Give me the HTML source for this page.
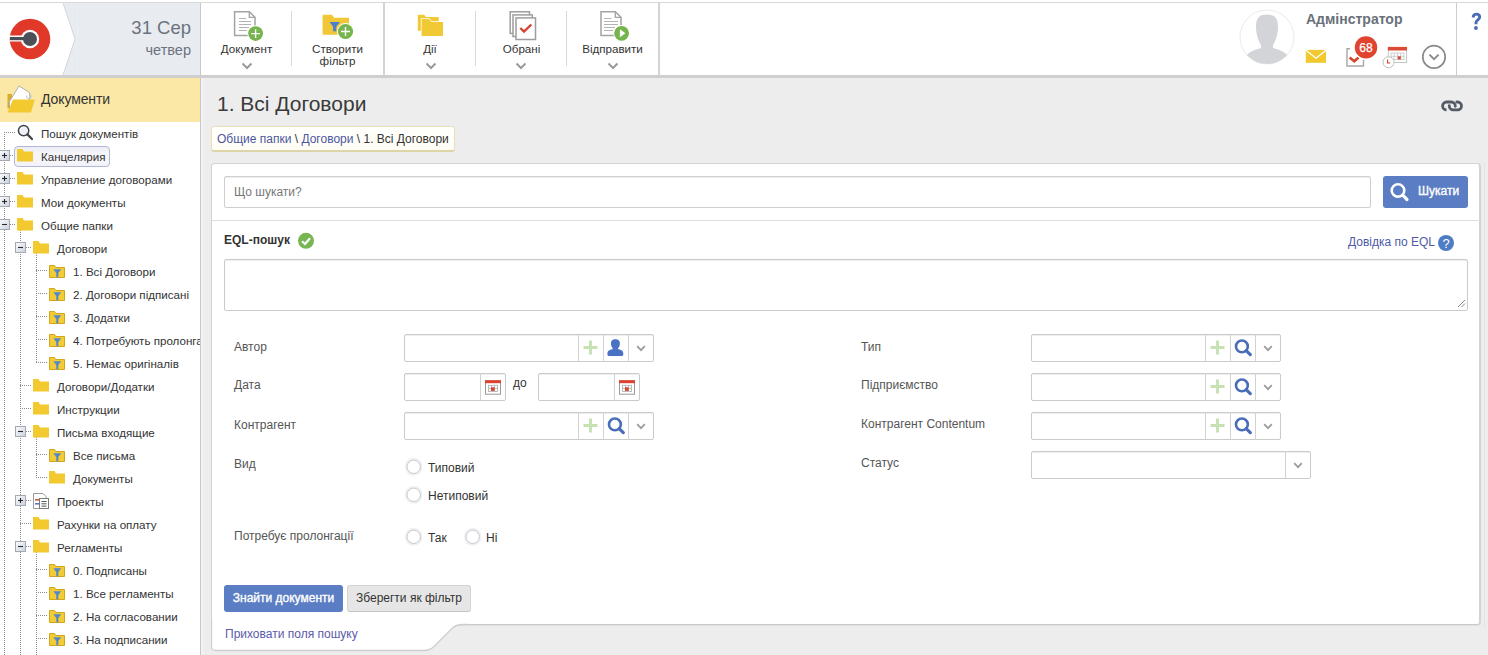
<!DOCTYPE html>
<html><head><meta charset="utf-8">
<style>
*{box-sizing:border-box;margin:0;padding:0}
html,body{width:1488px;height:655px;overflow:hidden;background:#ededed;font-family:"Liberation Sans",sans-serif;position:relative}
.a{position:absolute}
.t{position:absolute;white-space:nowrap;line-height:1}
/* header */
#hdr{left:0;top:0;width:1488px;height:78px;background:#fff}
#hdr .topline{left:0;top:2px;width:1488px;height:1px;background:#d9d9d9}
#hdr .botline{left:0;top:75px;width:1488px;height:3px;background:#cfcfcf}
.tb{color:#333;font-size:11.6px;text-align:center;margin-top:-0.6px}
.sep{background:#d8d8d8;width:1px}
.gsep{background:#d3d3d3;width:2px;top:3px;height:72px}
/* sidebar */
#side{left:0;top:78px;width:200px;height:577px;background:#fff;overflow:hidden}
#sideb{left:200px;top:78px;width:1px;height:577px;background:#c8c8c8}
.tr{position:absolute;font-size:11.6px;color:#333;white-space:nowrap;line-height:1}
/* main */
.lbl{position:absolute;font-size:12px;color:#555;white-space:nowrap;line-height:1}
.fld{position:absolute;background:#fff;border:1px solid #cbcbcb;border-radius:2px;box-shadow:inset 0 1px 1px rgba(0,0,0,0.07)}
.bs{position:absolute;top:0;bottom:0;width:1px;background:#dedede}
</style></head><body>
<div id="hdr" class="a">
  <div class="a topline"></div>
  <div class="a" style="left:63px;top:3px;width:137px;height:72px;background:#e8ebf0"></div>
  <svg class="a" style="left:0;top:3px" width="80" height="72">
    <polygon points="0,0 63,0 75,36 63,72 0,72" fill="#fff"/>
    <polyline points="63,0 75,36 63,72" fill="none" stroke="#d3d7dd" stroke-width="1"/>
    <line x1="77.5" y1="0" x2="77.5" y2="72" stroke="#eceef2" stroke-width="1"/>
  </svg>
  <svg class="a" style="left:9px;top:18px" width="42" height="42" viewBox="0 0 42 42">
    <circle cx="21" cy="21" r="20.3" fill="#e0392a"/>
    <rect x="1" y="17.5" width="20" height="6" fill="#fff"/>
    <circle cx="21" cy="21" r="9.2" fill="#fff"/>
    <rect x="1" y="19" width="20" height="3.2" fill="#4b5058"/>
    <circle cx="21" cy="21" r="7" fill="#4b5058"/>
  </svg>
  <div class="t" style="right:1297px;top:19px;font-size:18.5px;color:#6b737e">31 Сер</div>
  <div class="t" style="right:1297px;top:43px;font-size:14.5px;color:#6b737e">четвер</div>
  <div class="a" style="left:200px;top:3px;width:1px;height:72px;background:#c8c8c8"></div>

  <div class="a gsep" style="left:383px"></div>
  <div class="a gsep" style="left:658px"></div>
  <div class="a sep" style="left:291px;top:11px;height:55px"></div>
  <div class="a sep" style="left:475px;top:11px;height:55px"></div>
  <div class="a sep" style="left:566px;top:11px;height:55px"></div>

  <!-- Документ icon -->
  <svg class="a" style="left:230px;top:8px" width="40" height="36" viewBox="0 0 40 36">
    <path d="M4.6 3.7 H19.3 L25 9.3 V27.5 H4.6 Z" fill="#fff" stroke="#a3a3a3" stroke-width="1.5"/>
    <path d="M19.3 3.7 V9.3 H25" fill="none" stroke="#a3a3a3" stroke-width="1.3"/>
    <g stroke="#b3b3b3" stroke-width="1"><line x1="9" y1="10.5" x2="16" y2="10.5"/><line x1="9" y1="13.5" x2="21" y2="13.5"/><line x1="9" y1="16.5" x2="21" y2="16.5"/><line x1="9" y1="19.5" x2="19" y2="19.5"/><line x1="9" y1="22.5" x2="17" y2="22.5"/></g>
    <circle cx="25.6" cy="25.6" r="8.3" fill="#fff"/>
    <circle cx="25.6" cy="25.6" r="7.4" fill="#76b44e"/>
    <path d="M25.6 21.2 V30 M21.2 25.6 H30" stroke="#fff" stroke-width="1.4"/>
  </svg>
  <div class="t tb" style="left:201px;width:91px;top:44px">Документ</div>
  <svg class="a" style="left:241px;top:62px" width="12" height="8"><polyline points="1.5,1.5 6,6 10.5,1.5" fill="none" stroke="#9a9a9a" stroke-width="2"/></svg>

  <!-- Створити фільтр icon -->
  <svg class="a" style="left:320px;top:12px" width="36" height="30" viewBox="0 0 36 30">
    <path d="M2.6 2.8 H12 L14 5.8 H29 V22.7 H2.6 Z" fill="#f1c736"/>
    <path d="M9.4 10 H20 L16.3 14.5 V19.2 H13.1 V14.5 Z" fill="#4a7fcf"/>
    <circle cx="25.5" cy="19.5" r="8.5" fill="#fff"/>
    <circle cx="25.5" cy="19.5" r="7.6" fill="#76b44e"/>
    <path d="M25.5 15 V24 M21 19.5 H30" stroke="#fff" stroke-width="1.4"/>
  </svg>
  <div class="t tb" style="left:292px;width:91px;top:44px;line-height:11.2px">Створити<br>фільтр</div>

  <!-- Дії -->
  <svg class="a" style="left:415px;top:12px" width="32" height="28" viewBox="0 0 32 28">
    <path d="M2.8 2.8 H9 L11 5 H23.7 V18.7 H2.8 Z" fill="#f0c934"/>
    <path d="M6.6 6.9 H14 L16.5 10.1 H28 V24 H6.6 Z" fill="#fff" stroke="#fff" stroke-width="1.5"/>
    <path d="M6.6 6.9 H14 L16.5 10.1 H28 V24 H6.6 Z" fill="#f0c934"/>
  </svg>
  <div class="t tb" style="left:384px;width:92px;top:44px">Дії</div>
  <svg class="a" style="left:425px;top:62px" width="12" height="8"><polyline points="1.5,1.5 6,6 10.5,1.5" fill="none" stroke="#9a9a9a" stroke-width="2"/></svg>

  <!-- Обрані -->
  <svg class="a" style="left:506px;top:8px" width="34" height="36" viewBox="0 0 34 36">
    <rect x="4.2" y="3.8" width="19.3" height="21.6" fill="#fff" stroke="#9d9d9d" stroke-width="1.5"/>
    <rect x="7" y="6.9" width="19.3" height="21.6" fill="#fff" stroke="#9d9d9d" stroke-width="1.5"/>
    <rect x="10" y="9.9" width="19.5" height="21.6" fill="#fff" stroke="#9d9d9d" stroke-width="1.5"/>
    <polyline points="14.3,20 18,23.5 25.3,16.5" fill="none" stroke="#d8432f" stroke-width="2.4"/>
  </svg>
  <div class="t tb" style="left:476px;width:91px;top:44px">Обрані</div>
  <svg class="a" style="left:515px;top:62px" width="12" height="8"><polyline points="1.5,1.5 6,6 10.5,1.5" fill="none" stroke="#9a9a9a" stroke-width="2"/></svg>

  <!-- Відправити -->
  <svg class="a" style="left:597px;top:8px" width="36" height="36" viewBox="0 0 36 36">
    <path d="M4 3.8 H18.3 L24 9.3 V27.5 H4 Z" fill="#fff" stroke="#a3a3a3" stroke-width="1.5"/>
    <path d="M18.3 3.8 V9.3 H24" fill="none" stroke="#a3a3a3" stroke-width="1.3"/>
    <g stroke="#b3b3b3" stroke-width="1"><line x1="7" y1="10.5" x2="14.5" y2="10.5"/><line x1="7" y1="13.5" x2="21" y2="13.5"/><line x1="7" y1="16.5" x2="21" y2="16.5"/><line x1="7" y1="19.5" x2="18" y2="19.5"/><line x1="7" y1="22.5" x2="16" y2="22.5"/></g>
    <circle cx="24.6" cy="25.3" r="8.3" fill="#fff"/>
    <circle cx="24.6" cy="25.3" r="7.4" fill="#76b44e"/>
    <path d="M22.9 21.2 V29.2 L28.4 25.2 Z" fill="#fff"/>
  </svg>
  <div class="t tb" style="left:567px;width:91px;top:44px">Відправити</div>
  <svg class="a" style="left:607px;top:62px" width="12" height="8"><polyline points="1.5,1.5 6,6 10.5,1.5" fill="none" stroke="#9a9a9a" stroke-width="2"/></svg>

  <!-- avatar -->
  <svg class="a" style="left:1238px;top:8px" width="58" height="58" viewBox="0 0 58 58">
    <defs><clipPath id="avc"><circle cx="29" cy="29" r="27"/></clipPath></defs>
    <circle cx="29" cy="29" r="27" fill="#fff" stroke="#ebebed" stroke-width="1"/>
    <g clip-path="url(#avc)" fill="#d3d4d8">
      <path d="M18 19 C18 9 22 6.5 29 6.5 C36 6.5 40 9 40 19 C40 27 37 34 35 37 V40 C42 42 47 44 49 47 L45 58 H13 L9 47 C11 44 16 42 23 40 V37 C21 34 18 27 18 19 Z"/>
    </g>
  </svg>
  <div class="t" style="left:1306px;top:12px;font-size:14px;font-weight:bold;color:#6a717a;letter-spacing:0px">Адмінстратор</div>
  <!-- mail -->
  <svg class="a" style="left:1305px;top:49px" width="22" height="15" viewBox="0 0 22 15">
    <rect x="0.8" y="0.9" width="20.2" height="12.9" fill="#f1c92f"/>
    <polyline points="1,1.2 11,9.2 21,1.2" fill="none" stroke="#fff" stroke-width="1.3"/>
  </svg>
  <!-- tasks -->
  <svg class="a" style="left:1344px;top:46px" width="22" height="22" viewBox="0 0 22 22">
    <path d="M6 2.8 H3 V20 H19.5 V12" fill="none" stroke="#a8a8a8" stroke-width="1.4"/>
    <polyline points="5.6,11.5 10.3,15.3 14.5,11.5" fill="none" stroke="#d8432f" stroke-width="2.6"/>
  </svg>
  <svg class="a" style="left:1352px;top:34px" width="28" height="26" viewBox="0 0 28 26">
    <circle cx="14" cy="13.4" r="12.4" fill="#fff"/>
    <circle cx="14" cy="13.4" r="11.2" fill="#e0442f"/>
  </svg>
  <div class="t" style="left:1354px;top:41.5px;width:24px;text-align:center;font-size:12px;color:#fff;-webkit-text-stroke:0.25px #fff">68</div>
  <!-- calendar -->
  <svg class="a" style="left:1381px;top:45px" width="28" height="25" viewBox="0 0 28 25">
    <rect x="7.3" y="2.5" width="18.3" height="15" fill="#fff" stroke="#c4c4c4" stroke-width="1"/>
    <rect x="6.9" y="1.9" width="19.1" height="3.6" fill="#da4a35"/>
    <g fill="none" stroke="#c9c9c9" stroke-width="0.9"><rect x="10" y="8" width="13" height="6.6"/><line x1="13.2" y1="8" x2="13.2" y2="14.6"/><line x1="16.5" y1="8" x2="16.5" y2="14.6"/><line x1="19.8" y1="8" x2="19.8" y2="14.6"/><line x1="10" y1="11.3" x2="23" y2="11.3"/></g>
    <rect x="16.8" y="11.4" width="3" height="3" fill="#d9432f"/>
    <circle cx="7.5" cy="17.3" r="5.5" fill="#fff" stroke="#bdbdbd" stroke-width="1"/>
    <polyline points="6.6,14.5 6.6,18 9.3,18" fill="none" stroke="#d9432f" stroke-width="1.1"/>
  </svg>
  <!-- dropdown circle -->
  <svg class="a" style="left:1420px;top:43px" width="28" height="28" viewBox="0 0 28 28">
    <circle cx="14" cy="13.9" r="11.2" fill="none" stroke="#8a8a8a" stroke-width="1.7"/>
    <polyline points="9.5,11.6 14,16.2 18.6,11.6" fill="none" stroke="#8a8a8a" stroke-width="1.9"/>
  </svg>
  <div class="a" style="left:1456px;top:3px;width:1px;height:72px;background:#cdcdcd"></div>
  <svg class="a" style="left:1468px;top:10px" width="16" height="22" viewBox="0 0 16 22"><path d="M5.2 7.5 C5.2 5.2 6.8 4.1 8.5 4.1 C10.3 4.1 11.7 5.3 11.7 7.2 C11.7 9.5 8 10.2 8 12.5 V14.2" fill="none" stroke="#4b6db2" stroke-width="2.9"/><circle cx="7.9" cy="18" r="1.9" fill="#4b6db2"/></svg>

  <div class="a botline"></div>
</div>
<div id="sideb" class="a"></div>

<div id="side" class="a">
<div class="a" style="left:0;top:0;width:200px;height:44px;background:#fbe8a6"></div>
<svg class="a" style="left:6px;top:6px" width="32" height="30" viewBox="0 0 32 30">
   <path d="M1.5 10 H6 V24.5 H1.5 Z" fill="#d9ad2a"/>
   <path d="M3.5 17.5 L13 2 L23.5 8.5 L24 14 L18 24 H3.5 Z" fill="#fff" stroke="#b0b0b0" stroke-width="1"/>
   <path d="M20.8 11.5 a2.2 2.2 0 1 0 3 -1" fill="none" stroke="#b8c0d0" stroke-width="1"/>
   <path d="M7 15.5 H28.8 L25 28.5 H1.5 Z" fill="#f2c92f"/>
 </svg>
<div class="t" style="left:41px;top:14px;font-size:14px;color:#333;letter-spacing:-0.1px">Документи</div>
<div class="a" style="left:4px;top:54px;width:1px;height:523px;background:repeating-linear-gradient(to bottom,#8a8a8a 0 1px,transparent 1px 2px)"></div>
<div class="a" style="left:20px;top:152px;width:1px;height:425px;background:repeating-linear-gradient(to bottom,#8a8a8a 0 1px,transparent 1px 2px)"></div>
<div class="a" style="left:36px;top:175px;width:1px;height:110px;background:repeating-linear-gradient(to bottom,#8a8a8a 0 1px,transparent 1px 2px)"></div>
<div class="a" style="left:36px;top:359px;width:1px;height:41px;background:repeating-linear-gradient(to bottom,#8a8a8a 0 1px,transparent 1px 2px)"></div>
<div class="a" style="left:36px;top:474px;width:1px;height:103px;background:repeating-linear-gradient(to bottom,#8a8a8a 0 1px,transparent 1px 2px)"></div>
<div class="a" style="left:4px;top:54px;width:11px;height:1px;background:repeating-linear-gradient(to right,#8a8a8a 0 1px,transparent 1px 2px)"></div>
<svg class="a" style="left:16.5px;top:46px" width="17" height="17" viewBox="0 0 17 17"><circle cx="6.6" cy="6.6" r="5.2" fill="#eef2f8" stroke="#3f4247" stroke-width="1.5"/><line x1="10.4" y1="10.4" x2="15" y2="15" stroke="#3f4247" stroke-width="2.2" stroke-linecap="round"/></svg>
<div class="tr" style="left:41px;top:50px">Пошук документів</div>
<div class="a" style="left:4px;top:77px;width:11px;height:1px;background:repeating-linear-gradient(to right,#8a8a8a 0 1px,transparent 1px 2px)"></div>
<div class="a" style="left:14px;top:68px;width:96px;height:21px;border:1px solid #b2b8d3;border-radius:4px;background:linear-gradient(#eceef7,#f6f6fa 40%,#f2f2f8)"></div>
<svg class="a" style="left:-1px;top:72px" width="11" height="11" viewBox="0 0 11 11"><defs><linearGradient id="tg1" x1="0" y1="0" x2="1" y2="1"><stop offset="0" stop-color="#fdfdff"/><stop offset="1" stop-color="#c9d1de"/></linearGradient></defs><rect x="0.5" y="0.5" width="10" height="10" fill="url(#tg1)" stroke="#a4a8b0" stroke-width="1"/><line x1="3" y1="5.5" x2="8" y2="5.5" stroke="#2a2a2a" stroke-width="1.1"/><line x1="5.5" y1="3" x2="5.5" y2="8" stroke="#2a2a2a" stroke-width="1.1"/></svg>
<svg class="a" style="left:17px;top:71px" width="16" height="13" viewBox="0 0 16 13"><path d="M0 0 H5.5 L7 2.6 H16 V12.6 H0 Z" fill="#f2c92f"/></svg>
<div class="tr" style="left:41px;top:73px">Канцелярия</div>
<div class="a" style="left:4px;top:100px;width:11px;height:1px;background:repeating-linear-gradient(to right,#8a8a8a 0 1px,transparent 1px 2px)"></div>
<svg class="a" style="left:-1px;top:95px" width="11" height="11" viewBox="0 0 11 11"><defs><linearGradient id="tg2" x1="0" y1="0" x2="1" y2="1"><stop offset="0" stop-color="#fdfdff"/><stop offset="1" stop-color="#c9d1de"/></linearGradient></defs><rect x="0.5" y="0.5" width="10" height="10" fill="url(#tg2)" stroke="#a4a8b0" stroke-width="1"/><line x1="3" y1="5.5" x2="8" y2="5.5" stroke="#2a2a2a" stroke-width="1.1"/><line x1="5.5" y1="3" x2="5.5" y2="8" stroke="#2a2a2a" stroke-width="1.1"/></svg>
<svg class="a" style="left:17px;top:94px" width="16" height="13" viewBox="0 0 16 13"><path d="M0 0 H5.5 L7 2.6 H16 V12.6 H0 Z" fill="#f2c92f"/></svg>
<div class="tr" style="left:41px;top:96px">Управление договорами</div>
<div class="a" style="left:4px;top:123px;width:11px;height:1px;background:repeating-linear-gradient(to right,#8a8a8a 0 1px,transparent 1px 2px)"></div>
<svg class="a" style="left:-1px;top:118px" width="11" height="11" viewBox="0 0 11 11"><defs><linearGradient id="tg3" x1="0" y1="0" x2="1" y2="1"><stop offset="0" stop-color="#fdfdff"/><stop offset="1" stop-color="#c9d1de"/></linearGradient></defs><rect x="0.5" y="0.5" width="10" height="10" fill="url(#tg3)" stroke="#a4a8b0" stroke-width="1"/><line x1="3" y1="5.5" x2="8" y2="5.5" stroke="#2a2a2a" stroke-width="1.1"/><line x1="5.5" y1="3" x2="5.5" y2="8" stroke="#2a2a2a" stroke-width="1.1"/></svg>
<svg class="a" style="left:17px;top:117px" width="16" height="13" viewBox="0 0 16 13"><path d="M0 0 H5.5 L7 2.6 H16 V12.6 H0 Z" fill="#f2c92f"/></svg>
<div class="tr" style="left:41px;top:119px">Мои документы</div>
<div class="a" style="left:4px;top:146px;width:11px;height:1px;background:repeating-linear-gradient(to right,#8a8a8a 0 1px,transparent 1px 2px)"></div>
<svg class="a" style="left:-1px;top:141px" width="11" height="11" viewBox="0 0 11 11"><defs><linearGradient id="tg4" x1="0" y1="0" x2="1" y2="1"><stop offset="0" stop-color="#fdfdff"/><stop offset="1" stop-color="#c9d1de"/></linearGradient></defs><rect x="0.5" y="0.5" width="10" height="10" fill="url(#tg4)" stroke="#a4a8b0" stroke-width="1"/><line x1="3" y1="5.5" x2="8" y2="5.5" stroke="#2a2a2a" stroke-width="1.1"/></svg>
<svg class="a" style="left:17px;top:140px" width="16" height="13" viewBox="0 0 16 13"><path d="M0 0 H5.5 L7 2.6 H16 V12.6 H0 Z" fill="#f2c92f"/></svg>
<div class="tr" style="left:41px;top:142px">Общие папки</div>
<div class="a" style="left:20px;top:169px;width:11px;height:1px;background:repeating-linear-gradient(to right,#8a8a8a 0 1px,transparent 1px 2px)"></div>
<svg class="a" style="left:15px;top:164px" width="11" height="11" viewBox="0 0 11 11"><defs><linearGradient id="tg5" x1="0" y1="0" x2="1" y2="1"><stop offset="0" stop-color="#fdfdff"/><stop offset="1" stop-color="#c9d1de"/></linearGradient></defs><rect x="0.5" y="0.5" width="10" height="10" fill="url(#tg5)" stroke="#a4a8b0" stroke-width="1"/><line x1="3" y1="5.5" x2="8" y2="5.5" stroke="#2a2a2a" stroke-width="1.1"/></svg>
<svg class="a" style="left:33px;top:163px" width="16" height="13" viewBox="0 0 16 13"><path d="M0 0 H5.5 L7 2.6 H16 V12.6 H0 Z" fill="#f2c92f"/></svg>
<div class="tr" style="left:57px;top:165px">Договори</div>
<div class="a" style="left:36px;top:192px;width:11px;height:1px;background:repeating-linear-gradient(to right,#8a8a8a 0 1px,transparent 1px 2px)"></div>
<svg class="a" style="left:49px;top:187px" width="16" height="13" viewBox="0 0 16 13"><path d="M0.5 0.5 H5.5 L6.8 2.5 H15.5 V12.5 H0.5 Z" fill="#f2cb35" stroke="#d2a61a" stroke-width="1"/><path d="M4.4 4.2 H12.2 L9.3 8 V12.3 H7.3 V8 Z" fill="#5088cb"/></svg>
<div class="tr" style="left:73px;top:188px">1. Всі Договори</div>
<div class="a" style="left:36px;top:215px;width:11px;height:1px;background:repeating-linear-gradient(to right,#8a8a8a 0 1px,transparent 1px 2px)"></div>
<svg class="a" style="left:49px;top:210px" width="16" height="13" viewBox="0 0 16 13"><path d="M0.5 0.5 H5.5 L6.8 2.5 H15.5 V12.5 H0.5 Z" fill="#f2cb35" stroke="#d2a61a" stroke-width="1"/><path d="M4.4 4.2 H12.2 L9.3 8 V12.3 H7.3 V8 Z" fill="#5088cb"/></svg>
<div class="tr" style="left:73px;top:211px">2. Договори підписані</div>
<div class="a" style="left:36px;top:238px;width:11px;height:1px;background:repeating-linear-gradient(to right,#8a8a8a 0 1px,transparent 1px 2px)"></div>
<svg class="a" style="left:49px;top:233px" width="16" height="13" viewBox="0 0 16 13"><path d="M0.5 0.5 H5.5 L6.8 2.5 H15.5 V12.5 H0.5 Z" fill="#f2cb35" stroke="#d2a61a" stroke-width="1"/><path d="M4.4 4.2 H12.2 L9.3 8 V12.3 H7.3 V8 Z" fill="#5088cb"/></svg>
<div class="tr" style="left:73px;top:234px">3. Додатки</div>
<div class="a" style="left:36px;top:261px;width:11px;height:1px;background:repeating-linear-gradient(to right,#8a8a8a 0 1px,transparent 1px 2px)"></div>
<svg class="a" style="left:49px;top:256px" width="16" height="13" viewBox="0 0 16 13"><path d="M0.5 0.5 H5.5 L6.8 2.5 H15.5 V12.5 H0.5 Z" fill="#f2cb35" stroke="#d2a61a" stroke-width="1"/><path d="M4.4 4.2 H12.2 L9.3 8 V12.3 H7.3 V8 Z" fill="#5088cb"/></svg>
<div class="tr" style="left:73px;top:257px">4. Потребують пролонгації</div>
<div class="a" style="left:36px;top:284px;width:11px;height:1px;background:repeating-linear-gradient(to right,#8a8a8a 0 1px,transparent 1px 2px)"></div>
<svg class="a" style="left:49px;top:279px" width="16" height="13" viewBox="0 0 16 13"><path d="M0.5 0.5 H5.5 L6.8 2.5 H15.5 V12.5 H0.5 Z" fill="#f2cb35" stroke="#d2a61a" stroke-width="1"/><path d="M4.4 4.2 H12.2 L9.3 8 V12.3 H7.3 V8 Z" fill="#5088cb"/></svg>
<div class="tr" style="left:73px;top:280px">5. Немає оригіналів</div>
<div class="a" style="left:20px;top:307px;width:11px;height:1px;background:repeating-linear-gradient(to right,#8a8a8a 0 1px,transparent 1px 2px)"></div>
<svg class="a" style="left:33px;top:301px" width="16" height="13" viewBox="0 0 16 13"><path d="M0 0 H5.5 L7 2.6 H16 V12.6 H0 Z" fill="#f2c92f"/></svg>
<div class="tr" style="left:57px;top:303px">Договори/Додатки</div>
<div class="a" style="left:20px;top:330px;width:11px;height:1px;background:repeating-linear-gradient(to right,#8a8a8a 0 1px,transparent 1px 2px)"></div>
<svg class="a" style="left:33px;top:324px" width="16" height="13" viewBox="0 0 16 13"><path d="M0 0 H5.5 L7 2.6 H16 V12.6 H0 Z" fill="#f2c92f"/></svg>
<div class="tr" style="left:57px;top:326px">Инструкции</div>
<div class="a" style="left:20px;top:353px;width:11px;height:1px;background:repeating-linear-gradient(to right,#8a8a8a 0 1px,transparent 1px 2px)"></div>
<svg class="a" style="left:15px;top:348px" width="11" height="11" viewBox="0 0 11 11"><defs><linearGradient id="tg13" x1="0" y1="0" x2="1" y2="1"><stop offset="0" stop-color="#fdfdff"/><stop offset="1" stop-color="#c9d1de"/></linearGradient></defs><rect x="0.5" y="0.5" width="10" height="10" fill="url(#tg13)" stroke="#a4a8b0" stroke-width="1"/><line x1="3" y1="5.5" x2="8" y2="5.5" stroke="#2a2a2a" stroke-width="1.1"/></svg>
<svg class="a" style="left:33px;top:347px" width="16" height="13" viewBox="0 0 16 13"><path d="M0 0 H5.5 L7 2.6 H16 V12.6 H0 Z" fill="#f2c92f"/></svg>
<div class="tr" style="left:57px;top:349px">Письма входящие</div>
<div class="a" style="left:36px;top:376px;width:11px;height:1px;background:repeating-linear-gradient(to right,#8a8a8a 0 1px,transparent 1px 2px)"></div>
<svg class="a" style="left:49px;top:371px" width="16" height="13" viewBox="0 0 16 13"><path d="M0.5 0.5 H5.5 L6.8 2.5 H15.5 V12.5 H0.5 Z" fill="#f2cb35" stroke="#d2a61a" stroke-width="1"/><path d="M4.4 4.2 H12.2 L9.3 8 V12.3 H7.3 V8 Z" fill="#5088cb"/></svg>
<div class="tr" style="left:73px;top:372px">Все письма</div>
<div class="a" style="left:36px;top:399px;width:11px;height:1px;background:repeating-linear-gradient(to right,#8a8a8a 0 1px,transparent 1px 2px)"></div>
<svg class="a" style="left:49px;top:393px" width="16" height="13" viewBox="0 0 16 13"><path d="M0 0 H5.5 L7 2.6 H16 V12.6 H0 Z" fill="#f2c92f"/></svg>
<div class="tr" style="left:73px;top:395px">Документы</div>
<div class="a" style="left:20px;top:422px;width:11px;height:1px;background:repeating-linear-gradient(to right,#8a8a8a 0 1px,transparent 1px 2px)"></div>
<svg class="a" style="left:15px;top:417px" width="11" height="11" viewBox="0 0 11 11"><defs><linearGradient id="tg16" x1="0" y1="0" x2="1" y2="1"><stop offset="0" stop-color="#fdfdff"/><stop offset="1" stop-color="#c9d1de"/></linearGradient></defs><rect x="0.5" y="0.5" width="10" height="10" fill="url(#tg16)" stroke="#a4a8b0" stroke-width="1"/><line x1="3" y1="5.5" x2="8" y2="5.5" stroke="#2a2a2a" stroke-width="1.1"/><line x1="5.5" y1="3" x2="5.5" y2="8" stroke="#2a2a2a" stroke-width="1.1"/></svg>
<svg class="a" style="left:33px;top:415px" width="17" height="17" viewBox="0 0 17 17"><path d="M0.5 0.5 H10 L13 3.5 V15.5 H0.5 Z" fill="#fff" stroke="#9a9a9a" stroke-width="1"/><rect x="6.5" y="5.5" width="9" height="10" fill="#fff" stroke="#7a7a7a" stroke-width="1"/><line x1="8.5" y1="8.5" x2="13.5" y2="8.5" stroke="#555" stroke-width="1"/><line x1="8.5" y1="10.8" x2="13.5" y2="10.8" stroke="#555" stroke-width="1"/><line x1="8.5" y1="13.1" x2="13.5" y2="13.1" stroke="#555" stroke-width="1"/><rect x="2" y="6" width="4.5" height="1.6" fill="#c85a4a"/><rect x="2" y="10" width="4.5" height="1.6" fill="#5a78c0"/></svg>
<div class="tr" style="left:57px;top:418px">Проекты</div>
<div class="a" style="left:20px;top:445px;width:11px;height:1px;background:repeating-linear-gradient(to right,#8a8a8a 0 1px,transparent 1px 2px)"></div>
<svg class="a" style="left:33px;top:439px" width="16" height="13" viewBox="0 0 16 13"><path d="M0 0 H5.5 L7 2.6 H16 V12.6 H0 Z" fill="#f2c92f"/></svg>
<div class="tr" style="left:57px;top:441px">Рахунки на оплату</div>
<div class="a" style="left:20px;top:468px;width:11px;height:1px;background:repeating-linear-gradient(to right,#8a8a8a 0 1px,transparent 1px 2px)"></div>
<svg class="a" style="left:15px;top:463px" width="11" height="11" viewBox="0 0 11 11"><defs><linearGradient id="tg18" x1="0" y1="0" x2="1" y2="1"><stop offset="0" stop-color="#fdfdff"/><stop offset="1" stop-color="#c9d1de"/></linearGradient></defs><rect x="0.5" y="0.5" width="10" height="10" fill="url(#tg18)" stroke="#a4a8b0" stroke-width="1"/><line x1="3" y1="5.5" x2="8" y2="5.5" stroke="#2a2a2a" stroke-width="1.1"/></svg>
<svg class="a" style="left:33px;top:462px" width="16" height="13" viewBox="0 0 16 13"><path d="M0 0 H5.5 L7 2.6 H16 V12.6 H0 Z" fill="#f2c92f"/></svg>
<div class="tr" style="left:57px;top:464px">Регламенты</div>
<div class="a" style="left:36px;top:491px;width:11px;height:1px;background:repeating-linear-gradient(to right,#8a8a8a 0 1px,transparent 1px 2px)"></div>
<svg class="a" style="left:49px;top:486px" width="16" height="13" viewBox="0 0 16 13"><path d="M0.5 0.5 H5.5 L6.8 2.5 H15.5 V12.5 H0.5 Z" fill="#f2cb35" stroke="#d2a61a" stroke-width="1"/><path d="M4.4 4.2 H12.2 L9.3 8 V12.3 H7.3 V8 Z" fill="#5088cb"/></svg>
<div class="tr" style="left:73px;top:487px">0. Подписаны</div>
<div class="a" style="left:36px;top:514px;width:11px;height:1px;background:repeating-linear-gradient(to right,#8a8a8a 0 1px,transparent 1px 2px)"></div>
<svg class="a" style="left:49px;top:509px" width="16" height="13" viewBox="0 0 16 13"><path d="M0.5 0.5 H5.5 L6.8 2.5 H15.5 V12.5 H0.5 Z" fill="#f2cb35" stroke="#d2a61a" stroke-width="1"/><path d="M4.4 4.2 H12.2 L9.3 8 V12.3 H7.3 V8 Z" fill="#5088cb"/></svg>
<div class="tr" style="left:73px;top:510px">1. Все регламенты</div>
<div class="a" style="left:36px;top:537px;width:11px;height:1px;background:repeating-linear-gradient(to right,#8a8a8a 0 1px,transparent 1px 2px)"></div>
<svg class="a" style="left:49px;top:532px" width="16" height="13" viewBox="0 0 16 13"><path d="M0.5 0.5 H5.5 L6.8 2.5 H15.5 V12.5 H0.5 Z" fill="#f2cb35" stroke="#d2a61a" stroke-width="1"/><path d="M4.4 4.2 H12.2 L9.3 8 V12.3 H7.3 V8 Z" fill="#5088cb"/></svg>
<div class="tr" style="left:73px;top:533px">2. На согласовании</div>
<div class="a" style="left:36px;top:560px;width:11px;height:1px;background:repeating-linear-gradient(to right,#8a8a8a 0 1px,transparent 1px 2px)"></div>
<svg class="a" style="left:49px;top:555px" width="16" height="13" viewBox="0 0 16 13"><path d="M0.5 0.5 H5.5 L6.8 2.5 H15.5 V12.5 H0.5 Z" fill="#f2cb35" stroke="#d2a61a" stroke-width="1"/><path d="M4.4 4.2 H12.2 L9.3 8 V12.3 H7.3 V8 Z" fill="#5088cb"/></svg>
<div class="tr" style="left:73px;top:556px">3. На подписании</div>
</div>
<!-- main -->
<div class="a" style="left:201px;top:78px;width:4px;height:577px;background:linear-gradient(to right,#f3f3f3,#ededed)"></div>
<div class="t" style="left:217px;top:93px;font-size:21px;color:#3a3a3a">1. Всі Договори</div>
<svg class="a" style="left:1439px;top:99px" width="26" height="16" viewBox="0 0 26 16">
  <path d="M6.5 10.8 H7.5 A3.9 3.9 0 0 1 7.5 3 H12.4 A3.9 3.9 0 0 1 16.3 6.9 V7.3" fill="none" stroke="#545a66" stroke-width="2.8" stroke-linecap="round"/>
  <path d="M10.3 6.6 V6.9 A3.9 3.9 0 0 0 14.2 10.8 H18.6 A3.9 3.9 0 0 0 18.6 3 H17.8" fill="none" stroke="#545a66" stroke-width="2.8" stroke-linecap="round"/>
</svg>
<div class="a" style="left:211px;top:126px;width:244px;height:26px;background:linear-gradient(#fffffd,#fffdf4);border:1px solid #e8e0bb;border-bottom:2px solid #ddd4aa;border-radius:3px"></div>
<div class="t" style="left:217px;top:133px;font-size:12px;color:#333"><span style="color:#4d57a2">Общие папки</span> \ <span style="color:#4d57a2">Договори</span> \ 1. Всі Договори</div>

<div class="a" style="left:211px;top:163px;width:1270px;height:462px;background:#fff;border:1px solid #d3d3d3;border-right:2px solid #d3d3d3;border-bottom:1px solid #c9c9c9;border-radius:4px;box-shadow:0 1px 1px rgba(0,0,0,0.05)"></div>
<svg class="a" style="left:211px;top:618px" width="270" height="35" viewBox="0 0 270 35">
  <path d="M0 0 V28.5 A4 4 0 0 0 4.5 32.5 H213 C218 32.5 220.5 31 223.5 28 L241 10.5 C244 7.5 247 6.5 252 6.5 V0 Z" fill="#fff"/>
  <path d="M0.5 0 V28.5 A4 4 0 0 0 4.5 32.5 H213 C218 32.5 220.5 31 223.5 28 L241 10.5 C244 7.5 247 6.5 252 6.5 H258" fill="none" stroke="#cecece" stroke-width="1.3"/>
</svg>

<div class="fld" style="left:224px;top:176px;width:1147px;height:32px;border-color:#cfcfcf"></div>
<div class="t" style="left:234px;top:186px;font-size:12px;color:#777">Що шукати?</div>
<div class="a" style="left:1383px;top:176px;width:85px;height:32px;background:#5a7dc3;border-radius:3px"></div>
<svg class="a" style="left:1388px;top:180px" width="24" height="24" viewBox="0 0 24 24"><circle cx="10" cy="10.5" r="6.3" fill="none" stroke="#fff" stroke-width="2.6"/><line x1="14.7" y1="15.2" x2="19" y2="19.5" stroke="#fff" stroke-width="3.2" stroke-linecap="round"/></svg>
<div class="t" style="left:1418px;top:185px;font-size:12px;color:#fff;-webkit-text-stroke:0.35px #fff">Шукати</div>

<div class="a" style="left:212px;top:220px;width:1268px;height:1px;background:#dddddd"></div>
<div class="t" style="left:224px;top:234px;font-size:12px;font-weight:bold;color:#333">EQL-пошук</div>
<svg class="a" style="left:297px;top:232px" width="18" height="18" viewBox="0 0 18 18"><circle cx="9" cy="8.8" r="8" fill="#78b652"/><polyline points="5,9.2 8,12 13,6.2" fill="none" stroke="#fff" stroke-width="2.2"/></svg>
<div class="t" style="left:1348px;top:236px;font-size:12px;color:#4f5aa8">Довідка по EQL</div>
<svg class="a" style="left:1437px;top:233px" width="18" height="18" viewBox="0 0 18 18"><circle cx="9" cy="10" r="8" fill="#4f7dc4"/><text x="9" y="14.6" text-anchor="middle" font-family="Liberation Sans" font-size="13" fill="#fff">?</text></svg>
<div class="fld" style="left:224px;top:259px;width:1244px;height:52px"></div>
<svg class="a" style="left:1456px;top:298px" width="10" height="10" viewBox="0 0 10 10"><path d="M2 9 L9 2 M5.5 9 L9 5.5" stroke="#888" stroke-width="1"/></svg>

<div class="lbl" style="left:234px;top:341px">Автор</div>
<div class="fld" style="left:404px;top:334px;width:250px;height:28px"><div class="a" style="left:173px;top:-1px;width:26px;height:28px;border-left:1px solid #d2d2d2"><svg class="a" style="left:3px;top:5px" width="17" height="17" viewBox="0 0 17 17"><path d="M8.5 1.5 V15.5 M1.5 8.5 H15.5" stroke="#c6e2b2" stroke-width="2.9"/></svg></div><div class="a" style="left:198px;top:-1px;width:26px;height:28px;border-left:1px solid #d2d2d2"><svg class="a" style="left:3px;top:5px" width="17" height="17" viewBox="0 0 17 17"><path d="M4 4.5 C4 1.3 5.8 0.2 8.4 0.2 C11 0.2 12.9 1.3 12.9 4.5 C12.9 6.8 12 8.3 11 9.3 V10 C14.5 10.8 16.3 12 16.3 14.5 V15.5 Q16.3 16.9 15 16.9 H1.7 Q0.4 16.9 0.4 15.5 V14.5 C0.4 12 2.2 10.8 5.8 10 V9.3 C4.8 8.3 4 6.8 4 4.5 Z" fill="#4a72c4"/></svg></div><div class="a" style="left:223px;top:-1px;width:26px;height:28px;border-left:1px solid #d2d2d2"><svg class="a" style="left:7px;top:11px" width="11" height="8" viewBox="0 0 11 8"><polyline points="1.2,1.2 5,5.2 8.8,1.2" fill="none" stroke="#9c9c9c" stroke-width="1.8"/></svg></div></div>
<div class="lbl" style="left:234px;top:379px">Дата</div>
<div class="fld" style="left:404px;top:373px;width:102px;height:28px"><div class="a" style="left:75px;top:-1px;width:26px;height:28px;border-left:1px solid #d2d2d2"><svg class="a" style="left:3px;top:5px" width="18" height="18" viewBox="0 0 18 18"><rect x="1.5" y="3" width="15" height="13.2" fill="#fff" stroke="#9a9a9a" stroke-width="1"/><rect x="1" y="2.2" width="16" height="3" fill="#d9432f"/><g fill="none" stroke="#b5b5b5" stroke-width="0.9"><rect x="4.5" y="7.3" width="9" height="6.2"/><line x1="7.5" y1="7.3" x2="7.5" y2="13.5"/><line x1="10.5" y1="7.3" x2="10.5" y2="13.5"/><line x1="4.5" y1="10.4" x2="13.5" y2="10.4"/></g><rect x="7" y="9.3" width="3.6" height="3.6" fill="#d9432f"/></svg></div></div>
<div class="t" style="left:513px;top:377px;font-size:12px;color:#333">до</div>
<div class="fld" style="left:538px;top:373px;width:102px;height:28px"><div class="a" style="left:75px;top:-1px;width:26px;height:28px;border-left:1px solid #d2d2d2"><svg class="a" style="left:3px;top:5px" width="18" height="18" viewBox="0 0 18 18"><rect x="1.5" y="3" width="15" height="13.2" fill="#fff" stroke="#9a9a9a" stroke-width="1"/><rect x="1" y="2.2" width="16" height="3" fill="#d9432f"/><g fill="none" stroke="#b5b5b5" stroke-width="0.9"><rect x="4.5" y="7.3" width="9" height="6.2"/><line x1="7.5" y1="7.3" x2="7.5" y2="13.5"/><line x1="10.5" y1="7.3" x2="10.5" y2="13.5"/><line x1="4.5" y1="10.4" x2="13.5" y2="10.4"/></g><rect x="7" y="9.3" width="3.6" height="3.6" fill="#d9432f"/></svg></div></div>
<div class="lbl" style="left:234px;top:419px">Контрагент</div>
<div class="fld" style="left:404px;top:412px;width:250px;height:28px"><div class="a" style="left:173px;top:-1px;width:26px;height:28px;border-left:1px solid #d2d2d2"><svg class="a" style="left:3px;top:5px" width="17" height="17" viewBox="0 0 17 17"><path d="M8.5 1.5 V15.5 M1.5 8.5 H15.5" stroke="#c6e2b2" stroke-width="2.9"/></svg></div><div class="a" style="left:198px;top:-1px;width:26px;height:28px;border-left:1px solid #d2d2d2"><svg class="a" style="left:3px;top:5px" width="19" height="18" viewBox="0 0 19 18"><circle cx="7.9" cy="7.4" r="5.9" fill="none" stroke="#4a6db9" stroke-width="2.6"/><line x1="12.2" y1="11.7" x2="16.3" y2="15.6" stroke="#4a6db9" stroke-width="3.2" stroke-linecap="round"/></svg></div><div class="a" style="left:223px;top:-1px;width:26px;height:28px;border-left:1px solid #d2d2d2"><svg class="a" style="left:7px;top:11px" width="11" height="8" viewBox="0 0 11 8"><polyline points="1.2,1.2 5,5.2 8.8,1.2" fill="none" stroke="#9c9c9c" stroke-width="1.8"/></svg></div></div>
<div class="lbl" style="left:234px;top:458px">Вид</div>
<svg class="a" style="left:404px;top:458px" width="18" height="18" viewBox="0 0 18 18"><circle cx="9.7" cy="8.8" r="9" fill="#eff1f5"/><circle cx="9.7" cy="8.8" r="6.7" fill="#fff" stroke="#c9c9c9" stroke-width="1"/></svg>
<div class="t" style="left:428px;top:462px;font-size:12px;color:#333">Типовий</div>
<svg class="a" style="left:404px;top:486px" width="18" height="18" viewBox="0 0 18 18"><circle cx="9.7" cy="8.8" r="9" fill="#eff1f5"/><circle cx="9.7" cy="8.8" r="6.7" fill="#fff" stroke="#c9c9c9" stroke-width="1"/></svg>
<div class="t" style="left:428px;top:490px;font-size:12px;color:#333">Нетиповий</div>
<div class="lbl" style="left:234px;top:530px">Потребує пролонгації</div>
<svg class="a" style="left:404px;top:528px" width="18" height="18" viewBox="0 0 18 18"><circle cx="9.7" cy="8.8" r="9" fill="#eff1f5"/><circle cx="9.7" cy="8.8" r="6.7" fill="#fff" stroke="#c9c9c9" stroke-width="1"/></svg>
<div class="t" style="left:428px;top:532px;font-size:12px;color:#333">Так</div>
<svg class="a" style="left:463px;top:528px" width="18" height="18" viewBox="0 0 18 18"><circle cx="9.7" cy="8.8" r="9" fill="#eff1f5"/><circle cx="9.7" cy="8.8" r="6.7" fill="#fff" stroke="#c9c9c9" stroke-width="1"/></svg>
<div class="t" style="left:486px;top:532px;font-size:12px;color:#333">Ні</div>

<div class="lbl" style="left:861px;top:341px">Тип</div>
<div class="fld" style="left:1031px;top:334px;width:250px;height:28px"><div class="a" style="left:173px;top:-1px;width:26px;height:28px;border-left:1px solid #d2d2d2"><svg class="a" style="left:3px;top:5px" width="17" height="17" viewBox="0 0 17 17"><path d="M8.5 1.5 V15.5 M1.5 8.5 H15.5" stroke="#c6e2b2" stroke-width="2.9"/></svg></div><div class="a" style="left:198px;top:-1px;width:26px;height:28px;border-left:1px solid #d2d2d2"><svg class="a" style="left:3px;top:5px" width="19" height="18" viewBox="0 0 19 18"><circle cx="7.9" cy="7.4" r="5.9" fill="none" stroke="#4a6db9" stroke-width="2.6"/><line x1="12.2" y1="11.7" x2="16.3" y2="15.6" stroke="#4a6db9" stroke-width="3.2" stroke-linecap="round"/></svg></div><div class="a" style="left:223px;top:-1px;width:26px;height:28px;border-left:1px solid #d2d2d2"><svg class="a" style="left:7px;top:11px" width="11" height="8" viewBox="0 0 11 8"><polyline points="1.2,1.2 5,5.2 8.8,1.2" fill="none" stroke="#9c9c9c" stroke-width="1.8"/></svg></div></div>
<div class="lbl" style="left:861px;top:379px">Підприємство</div>
<div class="fld" style="left:1031px;top:373px;width:250px;height:28px"><div class="a" style="left:173px;top:-1px;width:26px;height:28px;border-left:1px solid #d2d2d2"><svg class="a" style="left:3px;top:5px" width="17" height="17" viewBox="0 0 17 17"><path d="M8.5 1.5 V15.5 M1.5 8.5 H15.5" stroke="#c6e2b2" stroke-width="2.9"/></svg></div><div class="a" style="left:198px;top:-1px;width:26px;height:28px;border-left:1px solid #d2d2d2"><svg class="a" style="left:3px;top:5px" width="19" height="18" viewBox="0 0 19 18"><circle cx="7.9" cy="7.4" r="5.9" fill="none" stroke="#4a6db9" stroke-width="2.6"/><line x1="12.2" y1="11.7" x2="16.3" y2="15.6" stroke="#4a6db9" stroke-width="3.2" stroke-linecap="round"/></svg></div><div class="a" style="left:223px;top:-1px;width:26px;height:28px;border-left:1px solid #d2d2d2"><svg class="a" style="left:7px;top:11px" width="11" height="8" viewBox="0 0 11 8"><polyline points="1.2,1.2 5,5.2 8.8,1.2" fill="none" stroke="#9c9c9c" stroke-width="1.8"/></svg></div></div>
<div class="lbl" style="left:861px;top:418px">Контрагент Contentum</div>
<div class="fld" style="left:1031px;top:412px;width:250px;height:28px"><div class="a" style="left:173px;top:-1px;width:26px;height:28px;border-left:1px solid #d2d2d2"><svg class="a" style="left:3px;top:5px" width="17" height="17" viewBox="0 0 17 17"><path d="M8.5 1.5 V15.5 M1.5 8.5 H15.5" stroke="#c6e2b2" stroke-width="2.9"/></svg></div><div class="a" style="left:198px;top:-1px;width:26px;height:28px;border-left:1px solid #d2d2d2"><svg class="a" style="left:3px;top:5px" width="19" height="18" viewBox="0 0 19 18"><circle cx="7.9" cy="7.4" r="5.9" fill="none" stroke="#4a6db9" stroke-width="2.6"/><line x1="12.2" y1="11.7" x2="16.3" y2="15.6" stroke="#4a6db9" stroke-width="3.2" stroke-linecap="round"/></svg></div><div class="a" style="left:223px;top:-1px;width:26px;height:28px;border-left:1px solid #d2d2d2"><svg class="a" style="left:7px;top:11px" width="11" height="8" viewBox="0 0 11 8"><polyline points="1.2,1.2 5,5.2 8.8,1.2" fill="none" stroke="#9c9c9c" stroke-width="1.8"/></svg></div></div>
<div class="lbl" style="left:861px;top:457px">Статус</div>
<div class="fld" style="left:1031px;top:451px;width:280px;height:28px"><div class="a" style="left:253px;top:-1px;width:26px;height:28px;border-left:1px solid #d2d2d2"><svg class="a" style="left:7px;top:11px" width="11" height="8" viewBox="0 0 11 8"><polyline points="1.2,1.2 5,5.2 8.8,1.2" fill="none" stroke="#9c9c9c" stroke-width="1.8"/></svg></div></div>

<div class="a" style="left:224px;top:585px;width:119px;height:27px;background:#5a7dc3;border-radius:3px"></div>
<div class="t" style="left:224px;top:592px;width:119px;text-align:center;font-size:12px;color:#fff;-webkit-text-stroke:0.35px #fff">Знайти документи</div>
<div class="a" style="left:347px;top:585px;width:124px;height:27px;background:#e6e6e6;border:1px solid #d4d4d4;border-bottom-color:#c4c4c4;border-radius:3px"></div>
<div class="t" style="left:347px;top:592px;width:124px;text-align:center;font-size:12px;color:#333">Зберегти як фільтр</div>
<div class="t" style="left:225px;top:628px;font-size:12px;color:#5a5aa8">Приховати поля пошуку</div>
<div class="a" style="left:1484px;top:162px;width:1px;height:466px;background:#e4e4e4"></div>
</body></html>
